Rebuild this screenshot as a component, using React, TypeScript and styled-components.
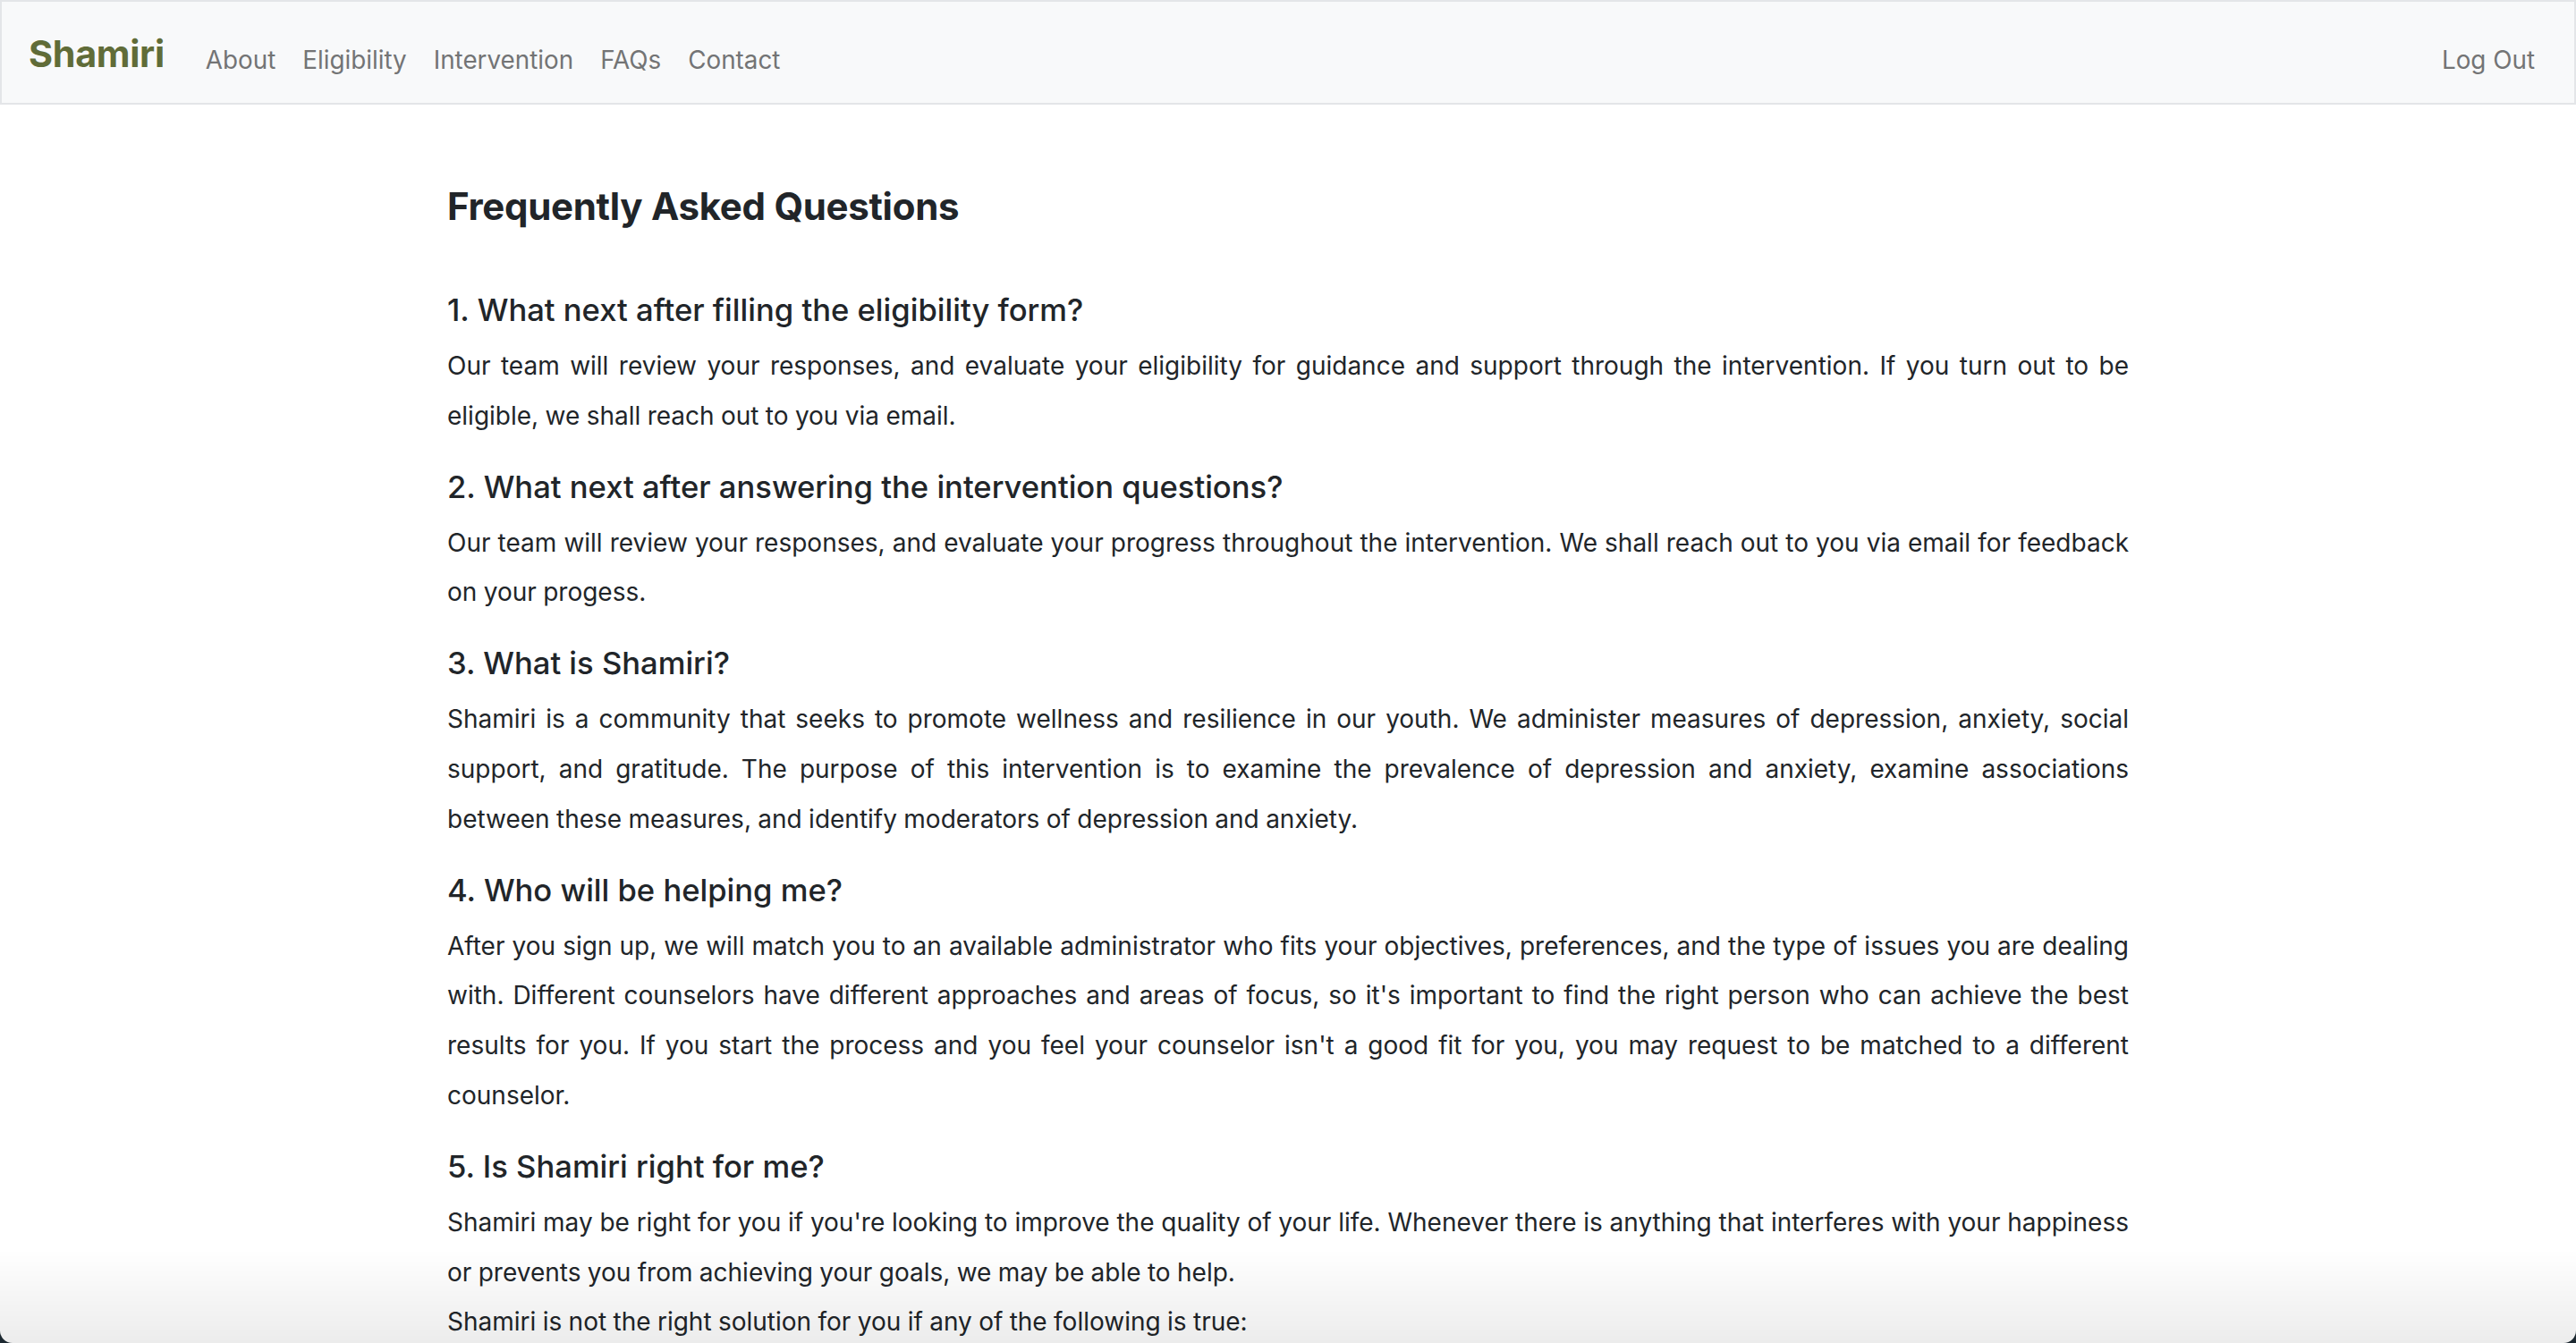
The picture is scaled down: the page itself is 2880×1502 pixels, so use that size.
import React from 'react';
import styled, { createGlobalStyle } from 'styled-components';

const GlobalStyle = createGlobalStyle`
  html, body {
    margin: 0;
    padding: 0;
    background: #ffffff;
  }
  body {
    font-family: 'Inter', 'Noto Sans', 'Liberation Sans', sans-serif;
    color: #212529;
    -webkit-font-smoothing: antialiased;
  }
  * {
    box-sizing: border-box;
  }
`;

const NavBar = styled.nav`
  display: flex;
  align-items: center;
  height: 117px;
  padding: 16px 44px 0 30px;
  background: #f8f9fa;
  border: 2px solid #e3e5e8;
`;

const Brand = styled.a`
  font-size: 41.3px;
  font-weight: 700;
  color: #606c38;
  text-decoration: none;
  letter-spacing: -0.3px;
  margin-right: 46px;
  margin-top: -14px;
`;

const NavLinks = styled.div`
  display: flex;
  align-items: center;
  gap: 30px;
  flex: 1;
`;

const NavLink = styled.a`
  font-size: 27.8px;
  color: #737475;
  text-decoration: none;
`;

const Page = styled.main`
  max-width: 1880px;
  margin: 0 auto;
  padding-top: 89px;
`;

const Title = styled.h1`
  margin: 0 0 69px;
  font-size: 42px;
  line-height: 50px;
  font-weight: 700;
  letter-spacing: -0.3px;
`;

const Question = styled.h5`
  margin: 29px 0 15px;
  font-size: 34.6px;
  line-height: 42px;
  font-weight: 500;
`;

const Answer = styled.p`
  margin: 0;
  font-size: 28px;
  line-height: 55.8px;
  word-spacing: -0.5px;
  text-align: justify;
`;

const WindowEdge = styled.div`
  position: fixed;
  inset: 0;
  pointer-events: none;
  border-radius: 0 0 14px 14px;
  box-shadow: 0 0 0 40px #1c2830;
  background: linear-gradient(to bottom, rgba(0, 0, 0, 0) 93%, rgba(0, 0, 0, 0.075) 100%);
`;

const faqs: { q: string; a: string[] }[] = [
  {
    q: '1. What next after filling the eligibility form?',
    a: [
      'Our team will review your responses, and evaluate your eligibility for guidance and support through the intervention. If you turn out to be eligible, we shall reach out to you via email.',
    ],
  },
  {
    q: '2. What next after answering the intervention questions?',
    a: [
      'Our team will review your responses, and evaluate your progress throughout the intervention. We shall reach out to you via email for feedback on your progess.',
    ],
  },
  {
    q: '3. What is Shamiri?',
    a: [
      'Shamiri is a community that seeks to promote wellness and resilience in our youth. We administer measures of depression, anxiety, social support, and gratitude. The purpose of this intervention is to examine the prevalence of depression and anxiety, examine associations between these measures, and identify moderators of depression and anxiety.',
    ],
  },
  {
    q: '4. Who will be helping me?',
    a: [
      "After you sign up, we will match you to an available administrator who fits your objectives, preferences, and the type of issues you are dealing with. Different counselors have different approaches and areas of focus, so it's important to find the right person who can achieve the best results for you. If you start the process and you feel your counselor isn't a good fit for you, you may request to be matched to a different counselor.",
    ],
  },
  {
    q: '5. Is Shamiri right for me?',
    a: [
      "Shamiri may be right for you if you're looking to improve the quality of your life. Whenever there is anything that interferes with your happiness or prevents you from achieving your goals, we may be able to help.",
      'Shamiri is not the right solution for you if any of the following is true:',
    ],
  },
];

export default function App() {
  return (
    <>
      <GlobalStyle />
      <NavBar>
        <Brand href="#">Shamiri</Brand>
        <NavLinks>
          <NavLink href="#">About</NavLink>
          <NavLink href="#">Eligibility</NavLink>
          <NavLink href="#">Intervention</NavLink>
          <NavLink href="#">FAQs</NavLink>
          <NavLink href="#">Contact</NavLink>
        </NavLinks>
        <NavLink href="#">Log Out</NavLink>
      </NavBar>
      <Page>
        <Title>Frequently Asked Questions</Title>
        {faqs.map((item) => (
          <section key={item.q}>
            <Question>{item.q}</Question>
            {item.a.map((line, i) => (
              <Answer key={i}>{line}</Answer>
            ))}
          </section>
        ))}
      </Page>
      <WindowEdge />
    </>
  );
}
